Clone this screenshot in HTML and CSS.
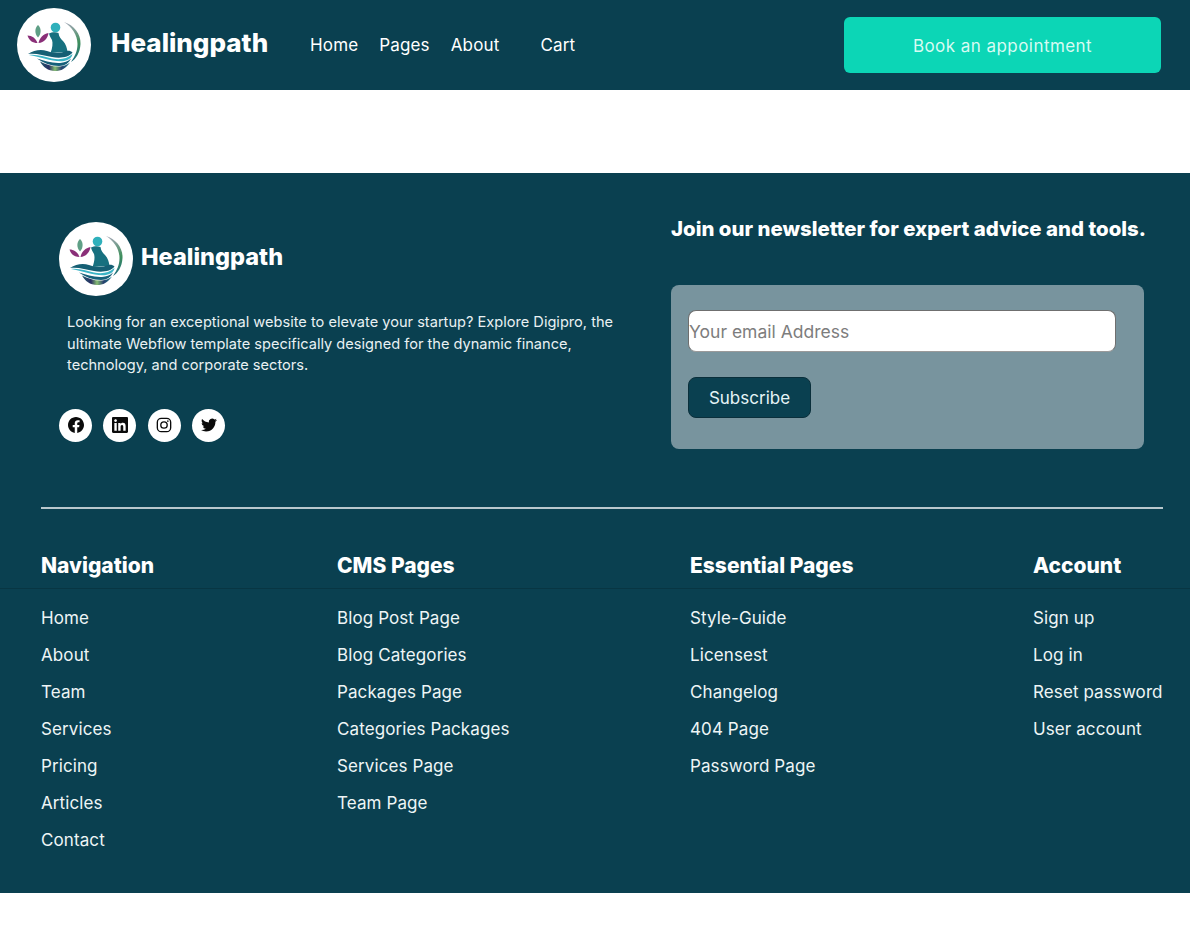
FILE: index.html
```html
<!DOCTYPE html>
<html lang="en">
<head>
    <meta charset="UTF-8">
    <meta name="viewport" content="width=device-width, initial-scale=1.0">
    <title>Healingpath</title>
    <link rel="stylesheet" href="styles.css">
</head>
<body>
    <svg class="sprites" width="0" height="0">
        <defs>
            <linearGradient id="ring" x1="0" y1="0" x2="0" y2="1">
                <stop offset="0" stop-color="#a5a8b8"/>
                <stop offset="0.5" stop-color="#3f8f5c"/>
                <stop offset="1" stop-color="#1d6d80"/>
            </linearGradient>
            <linearGradient id="band" x1="0" y1="0" x2="1" y2="0">
                <stop offset="0" stop-color="#1f5a6e"/>
                <stop offset="0.3" stop-color="#2a2f63"/>
                <stop offset="0.5" stop-color="#86bd72"/>
                <stop offset="0.72" stop-color="#27406d"/>
                <stop offset="1" stop-color="#1b7d8c"/>
            </linearGradient>
            <symbol id="logo" viewBox="0 0 74 74">
                <circle cx="37" cy="37" r="37" fill="#fff"/>
                <path d="M47 14C57 17 64 26 63.500 36C63 45 59 51 54 54C58 48 60.500 43 60.500 36C60.500 27 55 19 47 14Z" fill="url(#ring)"/>
                <circle cx="38.500" cy="19.500" r="4.800" fill="#2fb0bb"/>
                <path d="M32 25.500C35 24 39 24 41.500 25C42 29 44 31 46 33C49 36 50 40 50.500 44L33.500 45C35.500 40 36 35 35 32C34 30 32.500 28 32 25.500Z" fill="#17707f"/>
                <path d="M21 17C24.500 20 24.500 26 21 29.500C17.500 26 17.500 20 21 17Z" fill="#5f9f86"/>
                <path d="M10.500 27.500C15 27.500 19 30.500 20.500 35C15.500 35 12 32.500 10.500 27.500Z" fill="#8a2f78"/>
                <path d="M31.500 25C31 30 27 34.500 21.500 35C22.500 30 26 26 31.500 25Z" fill="#8a2f78"/>
                <path d="M11 46C17 42 24 41 30 43C36 45.500 44 45.500 49 43C52 42.500 54 43 55.500 44.500C52 49.500 43 50.500 35 49C27 47.500 19 45 11 46Z" fill="#155f74"/>
                <path d="M12 47C20 46 27 49 35 50.500C43 52 50 51 55.500 46C55 49.500 52 52 47 53C37 54.500 24 49 12 47Z" fill="#3bb4c6"/>
                <path d="M20 50.500C27 52.500 35 55.500 43 55C47 54.500 51 53.500 54 50.500C52 55 48 58 42 58C34 58 26 55 20 50.500Z" fill="#16607a"/>
                <path d="M23 53.500C29 56.500 36 59 43 58.500C47 58 50 57 53 54.500C49 60.500 44 63 38 63C31 63 26 59 23 53.500Z" fill="url(#band)"/>
            </symbol>
        </defs>
    </svg>

    <header class="topbar">
        <a class="brand" href="#">
            <svg class="logo"><use href="#logo"/></svg>
            <span class="brand-name">Healingpath</span>
        </a>
        <nav class="topnav">
            <a href="#">Home</a>
            <a href="#">Pages</a>
            <a class="about" href="#">About</a>
            <a href="#">Cart</a>
        </nav>
        <a class="book" href="#">Book an appointment</a>
    </header>

    <div class="gap"></div>

    <footer class="footer">
        <div class="footer-top">
            <div class="about-col">
                <div class="footer-brand">
                    <svg class="logo"><use href="#logo"/></svg>
                    <span class="footer-name">Healingpath</span>
                </div>
                <p class="blurb">Looking for an exceptional website to elevate your startup? Explore Digipro, the ultimate Webflow template specifically designed for the dynamic finance, technology, and corporate sectors.</p>
                <div class="socials">
                    <a href="#"><svg viewBox="0 0 24 24"><path d="M24 12.073c0-6.627-5.373-12-12-12s-12 5.373-12 12c0 5.99 4.388 10.954 10.125 11.854v-8.385H7.078v-3.47h3.047V9.43c0-3.007 1.792-4.669 4.533-4.669 1.312 0 2.686.235 2.686.235v2.953H15.83c-1.491 0-1.956.925-1.956 1.874v2.25h3.328l-.532 3.47h-2.796v8.385C19.612 23.027 24 18.062 24 12.073z"/></svg></a>
                    <a href="#"><svg viewBox="0 0 24 24"><path d="M20.447 20.452h-3.554v-5.569c0-1.328-.027-3.037-1.852-3.037-1.853 0-2.136 1.445-2.136 2.939v5.667H9.351V9h3.414v1.561h.046c.477-.9 1.637-1.85 3.37-1.85 3.601 0 4.267 2.37 4.267 5.455v6.286zM5.337 7.433c-1.144 0-2.063-.926-2.063-2.065 0-1.138.92-2.063 2.063-2.063 1.14 0 2.064.925 2.064 2.063 0 1.139-.925 2.065-2.064 2.065zm1.782 13.019H3.555V9h3.564v11.452zM22.225 0H1.771C.792 0 0 .774 0 1.729v20.542C0 23.227.792 24 1.771 24h20.451C23.2 24 24 23.227 24 22.271V1.729C24 .774 23.2 0 22.222 0h.003z"/></svg></a>
                    <a href="#"><svg viewBox="0 0 24 24" class="insta"><rect x="2" y="2" width="20" height="20" rx="6"/><circle cx="12" cy="12" r="4.8"/><circle class="dot" cx="17.8" cy="6.2" r="1.2"/></svg></a>
                    <a href="#"><svg viewBox="0 0 24 24"><path d="M23.953 4.57a10 10 0 01-2.825.775 4.958 4.958 0 002.163-2.723c-.951.555-2.005.959-3.127 1.184a4.92 4.92 0 00-8.384 4.482C7.69 8.095 4.067 6.13 1.64 3.162a4.822 4.822 0 00-.666 2.475c0 1.71.87 3.213 2.188 4.096a4.904 4.904 0 01-2.228-.616v.06a4.923 4.923 0 003.946 4.827 4.996 4.996 0 01-2.212.085 4.936 4.936 0 004.604 3.417 9.867 9.867 0 01-6.102 2.105c-.39 0-.779-.023-1.17-.067a13.995 13.995 0 007.557 2.209c9.053 0 13.998-7.496 13.998-13.985 0-.21 0-.42-.015-.63A9.935 9.935 0 0024 4.59z"/></svg></a>
                </div>
            </div>
            <div class="news-col">
                <h3 class="news-title">Join our newsletter for expert advice and tools.</h3>
                <form class="news-card">
                    <input class="news-input" type="text" placeholder="Your email Address">
                    <button class="news-btn" type="button">Subscribe</button>
                </form>
            </div>
        </div>

        <hr class="rule">

        <div class="link-heads">
            <h4>Navigation</h4>
            <h4>CMS Pages</h4>
            <h4>Essential Pages</h4>
            <h4>Account</h4>
        </div>
        <div class="link-lists">
            <ul>
                <li><a href="#">Home</a></li>
                <li><a href="#">About</a></li>
                <li><a href="#">Team</a></li>
                <li><a href="#">Services</a></li>
                <li><a href="#">Pricing</a></li>
                <li><a href="#">Articles</a></li>
                <li><a href="#">Contact</a></li>
            </ul>
            <ul>
                <li><a href="#">Blog Post Page</a></li>
                <li><a href="#">Blog Categories</a></li>
                <li><a href="#">Packages Page</a></li>
                <li><a href="#">Categories Packages</a></li>
                <li><a href="#">Services Page</a></li>
                <li><a href="#">Team Page</a></li>
            </ul>
            <ul>
                <li><a href="#">Style-Guide</a></li>
                <li><a href="#">Licensest</a></li>
                <li><a href="#">Changelog</a></li>
                <li><a href="#">404 Page</a></li>
                <li><a href="#">Password Page</a></li>
            </ul>
            <ul>
                <li><a href="#">Sign up</a></li>
                <li><a href="#">Log in</a></li>
                <li><a href="#">Reset password</a></li>
                <li><a href="#">User account</a></li>
            </ul>
        </div>
    </footer>
</body>
</html>
```

FILE: styles.css
```css
body{
    margin: 0;
    height: 934px;
    overflow: hidden;
    background: #fff;
    font-family: Inter, "Open Sans", sans-serif;
    color: #fff;
}

a{
    color: inherit;
    text-decoration: none;
}

.sprites{
    display: block;
    height: 0;
}

.logo{
    display: block;
    width: 74px;
    height: 74px;
    flex: none;
}

/*****
header
******/
.topbar{
    display: flex;
    align-items: center;
    height: 90px;
    padding: 0 29px 0 17px;
    box-sizing: border-box;
    background: #0a4050;
}

.brand{
    display: flex;
    align-items: center;
    gap: 20px;
    width: 293px;
}

.brand-name{
    margin-bottom: 6px;
    font-size: 26px;
    font-weight: 800;
}

.topnav{
    display: flex;
    font-size: 17px;
    letter-spacing: 0.15px;
    gap: 21px;
}

.topnav .about{
    margin-right: 20px;
}

.book{
    display: flex;
    align-items: center;
    justify-content: center;
    width: 317px;
    height: 56px;
    margin-left: auto;
    padding-top: 2px;
    box-sizing: border-box;
    border-radius: 6px;
    background: #0cd6b6;
    color: #d8fbf3;
    font-size: 17px;
    letter-spacing: 0.45px;
}

.gap{
    height: 83px;
}

/*****
footer
******/
.footer{
    height: 720px;
    background: #0a4050;
    box-sizing: border-box;
}

.footer-top{
    display: flex;
    justify-content: space-between;
    height: 334px;
    padding: 0 46px 0 59px;
}

.about-col{
    width: 570px;
    padding-top: 49px;
}

.footer-brand{
    display: flex;
    align-items: center;
    gap: 8px;
}

.footer-name{
    margin-bottom: 6px;
    font-size: 23.5px;
    font-weight: 800;
}

.blurb{
    margin: 16px 0 0 8px;
    font-size: 14.6px;
    line-height: 21.5px;
    color: #e9f1f3;
}

.socials{
    display: flex;
    gap: 11.4px;
    margin-top: 32px;
}

.socials a{
    display: flex;
    align-items: center;
    justify-content: center;
    width: 33px;
    height: 33px;
    border-radius: 50%;
    background: #fff;
}

.socials svg{
    width: 16px;
    height: 16px;
    fill: #0b0b0b;
}

.socials svg.insta{
    fill: none;
    stroke: #0b0b0b;
    stroke-width: 2;
}

.socials svg.insta .dot{
    fill: #0b0b0b;
    stroke: none;
}

.news-col{
    width: 473px;
}

.news-title{
    margin: 43px 0 0;
    font-size: 20.4px;
    line-height: 26px;
    font-weight: 800;
    white-space: nowrap;
}

.news-card{
    display: flex;
    flex-direction: column;
    align-items: flex-start;
    height: 164px;
    margin-top: 43px;
    padding: 25px 0 0 17px;
    box-sizing: border-box;
    border-radius: 8px;
    background: #78949e;
}

.news-input{
    width: 428px;
    height: 42px;
    padding: 0;
    box-sizing: border-box;
    border: 1px solid #6f6f6f;
    border-bottom-color: #9a9a9a;
    border-radius: 8px;
    background: #fff;
    font-family: inherit;
    font-size: 17.5px;
}

.news-input::placeholder{
    color: #7d7d7d;
}

.news-btn{
    width: 123px;
    height: 41px;
    margin-top: 25px;
    border: 1px solid #0a2f3b;
    border-radius: 8px;
    background: #0a4050;
    color: #e4f4f6;
    font-family: inherit;
    font-size: 17px;
}

.rule{
    height: 2px;
    margin: 0 27px 0 41px;
    border: none;
    background: #b9c8cd;
}

.link-heads,
.link-lists{
    display: grid;
    grid-template-columns: 296px 353px 343px auto;
    padding: 0 27px 0 41px;
}

.link-heads{
    height: 80px;
    box-sizing: border-box;
    border-bottom: 1px solid #083643;
}

.link-heads h4{
    margin: 43px 0 0;
    font-size: 21px;
    line-height: 28px;
    font-weight: 800;
}

.link-lists ul{
    margin: 0;
    padding: 11px 0 0;
    list-style: none;
}

.link-lists li{
    height: 37px;
    line-height: 37px;
    font-size: 17px;
    letter-spacing: 0.1px;
    color: #eef5f6;
    white-space: nowrap;
}
```
